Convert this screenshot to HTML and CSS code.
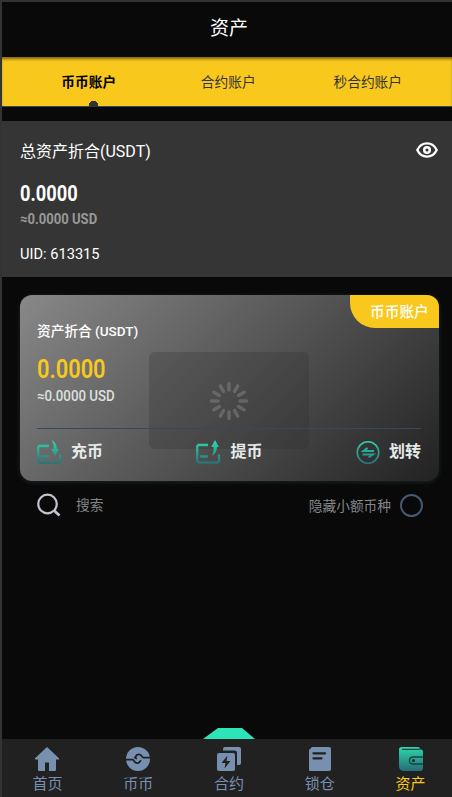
FILE: index.html
```html
<!DOCTYPE html>
<html lang="zh-CN">
<head>
<meta charset="utf-8">
<title>资产</title>
<link rel="stylesheet" href="styles.css">
</head>
<body>
<div class="app">
  <header class="header">资产</header>
  <nav class="tabs">
    <a class="tab active">币币账户</a>
    <a class="tab">合约账户</a>
    <a class="tab">秒合约账户</a>
  </nav>
  <section class="summary">
    <div class="summary-head">
      <span>总资产折合(USDT)</span>
      <svg class="eye" width="22" height="16" viewBox="0 0 22 16" fill="none" stroke="#fff"><path d="M1.3 8C5.5-.8 16.500-.8 20.700 8 16.500 16.800 5.500 16.800 1.300 8Z" stroke-width="2.300"/><circle cx="11" cy="8" r="2.800" stroke-width="2.500"/></svg>
    </div>
    <div class="total"><span class="num">0.0000</span></div>
    <div class="approx"><span class="num">≈0.0000 USD</span></div>
    <div class="uid"><span class="num">UID: 613315</span></div>
  </section>
  <main class="content">
    <section class="card">
      <span class="badge">币币账户</span>
      <div class="loading">
        <svg width="40" height="40" viewBox="-20 -20 40 40" stroke="#777" stroke-width="3.500" stroke-linecap="round">
          <path d="M0-11v-6.500M5.500-9.500l3.200-5.600M9.500-5.500l5.600-3.200M11 0h6.500M9.500 5.500l5.600 3.200M5.500 9.500l3.200 5.600M0 11v6.500M-5.500 9.500l-3.200 5.600M-9.500 5.500l-5.600 3.200M-11 0h-6.500M-9.500-5.500l-5.600-3.200M-5.500-9.500l-3.200-5.600"/>
        </svg>
      </div>
      <div class="card-title">资产折合 <span class="num">(USDT)</span></div>
      <div class="card-total"><span class="num">0.0000</span></div>
      <div class="card-approx"><span class="num">≈0.0000 USD</span></div>
      <div class="actions">
        <a class="action">
          <svg width="25" height="25" viewBox="0 0 25 25"><defs><linearGradient id="teal" gradientUnits="userSpaceOnUse" x1="0" y1="0" x2="0" y2="25"><stop offset="0" stop-color="#2bdcae"/><stop offset="1" stop-color="#286c76"/></linearGradient></defs><g fill="none" stroke="url(#teal)" stroke-width="2.300"><path d="M12 6H2.500L1.200 7.300V21l1.500 1.700h19L23 21v-6.500"/><path d="M5 16.500h6" stroke-linecap="round"/></g><path d="M14.500 0C18 1.500 19.800 5 20 9h2l-4 7-3.800-7h2.300C16.900 5.500 16.300 3 14.500 0Z" fill="url(#teal)"/></svg>
          <span>充币</span>
        </a>
        <a class="action">
          <svg width="25" height="25" viewBox="0 0 25 25"><g fill="none" stroke="url(#teal)" stroke-width="2.300"><path d="M12 5H2.500L1.200 6.300V21l1.500 1.700h19L23 21v-6.500"/><path d="M5 16.500h6" stroke-linecap="round"/></g><path d="M16 16c3.500-2 4.800-5 5-9h2L19 0l-3.800 7h2.300c.3 3.500-.2 6-1.500 9Z" fill="url(#teal)"/></svg>
          <span>提币</span>
        </a>
        <a class="action">
          <svg width="24" height="25" viewBox="0 0 24 25" fill="none" stroke="url(#teal)"><circle cx="12" cy="12.500" r="10.700" stroke-width="1.600"/><path d="M18 11H7.500l4-3" stroke-width="2"/><path d="M6.500 14.500H17l-4.500 3" stroke-width="2"/></svg>
          <span>划转</span>
        </a>
      </div>
    </section>
    <div class="filter">
      <div class="search">
        <svg width="24" height="24" viewBox="0 0 24 24" fill="none" stroke="#c5c3cf" stroke-width="2.200"><circle cx="10.500" cy="11" r="9.300"/><path d="M17 17.500l5.500 5" stroke-width="2.700"/></svg>
        <span>搜索</span>
      </div>
      <div class="hide"><span>隐藏小额币种</span><i class="radio"></i></div>
    </div>
  </main>
  <footer class="bottom">
    <div class="bump"></div>
    <a class="item"><svg width="26" height="26" viewBox="0 0 26 26"><path d="M13 1 1 12.300v1.200h3V24q0 1 1 1h6v-8.500h4V25h6q1 0 1-1V13.500h3v-1.200Z" fill="#7890b0"/></svg><span>首页</span></a>
    <a class="item"><svg width="26" height="26" viewBox="0 0 26 26"><circle cx="13" cy="13" r="12" fill="#7890b0"/><path d="M0 13.700h7.500q1 0 1.700 1.500 2 3 5 1.200l1.800-2.200M26 11.700h-7.500q-1 0-1.700-1.500-2-3-5-1.200l-1.800 2.700 2 1" fill="none" stroke="#212121" stroke-width="1.800"/></svg><span>币币</span></a>
    <a class="item"><svg width="26" height="26" viewBox="0 0 26 26" fill="#7890b0"><path d="M7 3q0-2 2-2h14q2 0 2 2v14q0 2-2 2h-2V7q0-2.500-2.500-2.500H7Z"/><path d="M3 7h14q2 0 2 2v14q0 2-2 2H3q-2 0-2-2V9q0-2 2-2Z"/><path d="m11.500 9.500-6 7.500h4l-1 5.500 6-7.500h-4Z" fill="#212121"/></svg><span>合约</span></a>
    <a class="item"><svg width="26" height="26" viewBox="0 0 26 26"><path d="M5 1h17q2 0 2 2v20q0 2-2 2H3q-1 0-1-1V4Z" fill="#7890b0"/><path d="M6.500 7.300H18M6.500 12.300h8" stroke="#212121" stroke-width="2.300" stroke-linecap="round"/></svg><span>锁仓</span></a>
    <a class="item current"><svg width="26" height="26" viewBox="0 0 26 26"><path d="M3.500 1H20q2 0 2 2.300 3 0 3 2.500V22q0 3-3 3H6q-5 0-5-5V3.500Q1 1 3.500 1Z" fill="url(#teal)"/><path d="M4 3.300h18M25 11H15.500q-4 0-4 3.500t4 3.500H25" fill="none" stroke="#19443f" stroke-width="1.300"/><circle cx="15.500" cy="14.500" r="1.500" fill="#19302e"/></svg><span>资产</span></a>
  </footer>
</div>
</body>
</html>
```
FILE: styles.css
```css
* { box-sizing: border-box; }
body {
  margin: 0;
  background: #090909;
  color: #fff;
  font-family: Roboto, "Noto Sans CJK SC", sans-serif;
}
.app {
  height: 797px;
  border-top: 2px solid #333;
  border-left: 2px solid #333;
  display: flex;
  flex-direction: column;
  overflow: hidden;
}
svg { display: block; flex: none; }
.num { display: inline-block; transform-origin: 0 50%; }
.header {
  height: 55px;
  line-height: 54px;
  text-align: center;
  font-size: 19px;
  padding-left: 4px;
}
.tabs {
  height: 50px;
  flex: none;
  display: grid;
  grid-template-columns: repeat(3, 139.500px);
  padding-left: 17px;
  background: #f8c81c;
  border-bottom: 1px solid #34495e;
  box-shadow: inset 0 3px 3px -1px rgba(0, 0, 0, .5);
  color: #333;
  font-size: 13.700px;
  line-height: 50px;
  text-align: center;
}
.tab.active {
  color: #000;
  font-weight: 700;
  background: radial-gradient(circle at 74.500px 48.500px, #333 4.500px, transparent 5px);
}
.summary {
  height: 156px;
  flex: none;
  margin-top: 14px;
  padding: 17px 14px 0 18px;
  background: #353535;
}
.summary-head {
  height: 24px;
  display: flex;
  align-items: center;
  justify-content: space-between;
  font-size: 16px;
}
.eye { margin-top: -1px; }
.total { height: 26px; margin-top: 19px; font-size: 22px; font-weight: 700; line-height: 26px; }
.total .num { transform: scaleX(.83); }
.approx { height: 20px; margin-top: 2px; color: #999; font-size: 15px; font-weight: 700; line-height: 20px; }
.approx .num { transform: scaleX(.87); }
.uid { margin-top: 15px; font-size: 15px; line-height: 20px; }
.uid .num { transform: scaleX(.975); }
.content { padding: 18px 13px 0 18px; flex: 1; }
.card {
  position: relative;
  height: 186px;
  padding: 24px 18px 0 17px;
  border-radius: 12px;
  background: linear-gradient(135deg, #888, #222);
  box-shadow: 0 1px 5px rgba(65, 105, 115, .3);
}
.badge {
  position: absolute;
  top: 0;
  right: 0;
  width: 89px;
  height: 33px;
  padding-left: 20px;
  line-height: 35px;
  border-radius: 0 12px 0 25px;
  background: #f8c81c;
  font-size: 14.700px;
  font-weight: 500;
}
.loading {
  position: absolute;
  left: 129px;
  top: 57px;
  width: 160px;
  height: 97px;
  border-radius: 6px;
  background: rgba(45, 45, 45, .25);
  display: flex;
  align-items: center;
  justify-content: center;
}
.loading svg { opacity: .65; }
.card-title { height: 24px; line-height: 24px; font-size: 13.700px; font-weight: 500; }
.card-title .num { transform: scaleX(.99); }
.card-total { position: relative; height: 32px; margin-top: 10px; line-height: 32px; font-size: 26px; font-weight: 600; color: #f8c81c; }
.card-total .num { transform: scaleX(.84); }
.card-approx { position: relative; height: 20px; margin-top: 2px; line-height: 20px; font-size: 14.500px; font-weight: 500; color: #dce0df; }
.card-approx .num { transform: scaleX(.915); }
.actions {
  position: relative;
  height: 48px;
  margin-top: 21px;
  border-top: 1px solid #34495e;
  display: flex;
  align-items: center;
  justify-content: space-between;
}
.action { display: flex; align-items: center; gap: 9px; color: #e5ebe8; font-size: 16px; font-weight: 700; }
.action svg { margin-top: -1px; }
.action span { margin-top: -5px; }
.filter {
  height: 48px;
  padding: 0 16px 0 17px;
  display: flex;
  align-items: center;
  justify-content: space-between;
  color: #85868b;
  font-size: 13.700px;
}
.search, .hide { display: flex; align-items: center; }
.search { gap: 15px; }
.search span { margin-top: -2px; }
.hide { gap: 9px; }
.radio { width: 23px; height: 23px; border: 2px solid #455a72; border-radius: 50%; }
.bottom {
  position: relative;
  height: 58px;
  flex: none;
  display: grid;
  grid-template-columns: repeat(5, 90.800px);
  background: #212121;
  color: #7890b0;
  font-size: 15px;
}
.bump {
  position: absolute;
  left: 201px;
  top: -11px;
  width: 52px;
  height: 11px;
  background: #2de3b8;
  clip-path: polygon(15px 0, 39px 0, 100% 100%, 0 100%);
}
.item { padding-top: 7px; display: flex; flex-direction: column; align-items: center; line-height: 25px; }
.current { color: #f8c81c; }
```
